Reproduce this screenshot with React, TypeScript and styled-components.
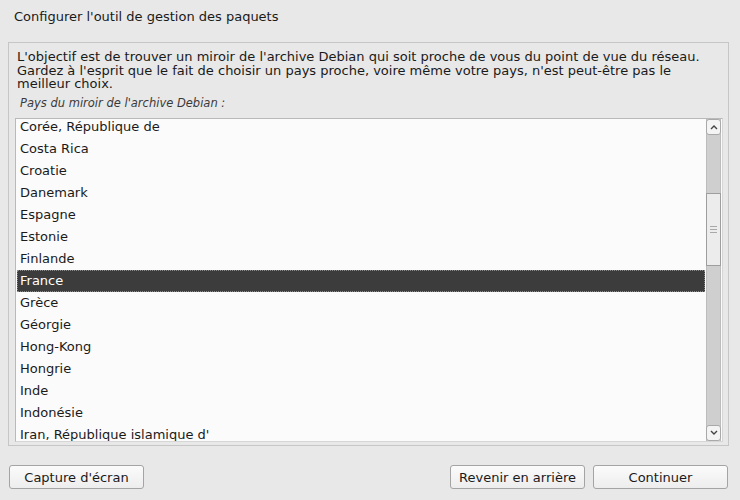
import React from 'react';
import styled, { createGlobalStyle } from 'styled-components';

const GlobalStyle = createGlobalStyle`
  html, body {
    margin: 0;
    padding: 0;
    background: #e8e8e8;
  }
  body {
    font-family: "DejaVu Sans", "Liberation Sans", sans-serif;
    font-size: 13px;
    color: #1a1a1a;
  }
`;

const countries = [
  'Corée, République de',
  'Costa Rica',
  'Croatie',
  'Danemark',
  'Espagne',
  'Estonie',
  'Finlande',
  'France',
  'Grèce',
  'Géorgie',
  'Hong-Kong',
  'Hongrie',
  'Inde',
  'Indonésie',
  "Iran, République islamique d'",
];

const Screen = styled.div`
  width: 740px;
  height: 500px;
  box-sizing: border-box;
  padding: 10px 11px 0 8px;
  display: flex;
  flex-direction: column;
`;

const Title = styled.div`
  padding-left: 6px;
  height: 14px;
  line-height: 14px;
  font-size: 13px;
  margin-bottom: 18px;
`;

const Panel = styled.div`
  height: 404px;
  box-sizing: border-box;
  border: 1px solid #c6c6c6;
  padding: 7px 5px 3px 6px;
  display: flex;
  flex-direction: column;
`;

const Intro = styled.p`
  margin: 0 0 0 2px;
  line-height: 13.5px;
`;

const Label = styled.div`
  margin: 6px 0 8.5px 5px;
  line-height: 13px;
  font-style: italic;
  font-size: 11.5px;
  color: #3a3a3a;
`;

const ListBox = styled.div`
  flex: 1;
  display: flex;
  background: #fbfbfb;
  border: 1px solid #b9b9b9;
  border-right-color: #d6d6d6;
  border-bottom-color: #d6d6d6;
  padding: 0 1px 0 1px;
  overflow: hidden;
`;

const Rows = styled.div`
  flex: 1;
  overflow: hidden;
  padding-right: 1px;
`;

const RowsInner = styled.div`
  margin-top: -3px;
`;

const Row = styled.div<{ $selected?: boolean }>`
  height: 22px;
  line-height: 22px;
  padding-left: 3px;
  box-sizing: border-box;
  white-space: nowrap;
  background: ${(p) => (p.$selected ? '#3c3c3c' : 'transparent')};
  color: ${(p) => (p.$selected ? '#ffffff' : '#1a1a1a')};
  outline: ${(p) => (p.$selected ? '1px dotted #8a8a8a' : 'none')};
  outline-offset: -1px;
`;

const Scrollbar = styled.div`
  width: 15px;
  display: flex;
  flex-direction: column;
  background: #cfcfcf;
  border-left: 1px solid #bcbcbc;
  border-right: 1px solid #bcbcbc;
  box-sizing: border-box;
`;

const Arrow = styled.div`
  height: 14px;
  background: #f4f4f4;
  border: 1px solid #a9a9a9;
  border-radius: 3px;
  margin: 0 -1px;
  display: flex;
  align-items: center;
  justify-content: center;
`;

const Track = styled.div`
  flex: 1;
  display: flex;
  flex-direction: column;
`;

const Thumb = styled.div`
  margin-top: 58px;
  height: 71px;
  background: #ececec;
  border: 1px solid #9e9e9e;
  margin-left: -1px;
  margin-right: -1px;
  display: flex;
  flex-direction: column;
  align-items: center;
  justify-content: center;
  gap: 2px;
`;

const Grip = styled.div`
  width: 7px;
  height: 1px;
  background: #a8a8a8;
`;

const Footer = styled.div`
  display: flex;
  align-items: center;
  gap: 8px;
  margin-top: 19px;
  padding: 0 1px 0 1px;
`;

const Spacer = styled.div`
  flex: 1;
`;

const Button = styled.button`
  width: 135px;
  height: 24px;
  box-sizing: border-box;
  border: 1px solid #a4a4a4;
  border-radius: 3px;
  background: linear-gradient(#fbfbfb, #ededed);
  font-family: "DejaVu Sans", "Liberation Sans", sans-serif;
  font-size: 13px;
  color: #1a1a1a;
  padding: 0;
`;

const Chevron = ({ up }: { up?: boolean }) => (
  <svg width="8" height="6" viewBox="0 0 8 6">
    <path
      d={up ? 'M1 5 L4 2 L7 5' : 'M1 1 L4 4 L7 1'}
      fill="none"
      stroke="#444"
      strokeWidth="1.4"
    />
  </svg>
);

export default function App() {
  return (
    <Screen>
      <GlobalStyle />
      <Title>Configurer l'outil de gestion des paquets</Title>
      <Panel>
        <Intro>
          L'objectif est de trouver un miroir de l'archive Debian qui soit proche de vous du point de vue du réseau.
          <br />
          Gardez à l'esprit que le fait de choisir un pays proche, voire même votre pays, n'est peut-être pas le
          meilleur choix.
        </Intro>
        <Label>Pays du miroir de l'archive Debian :</Label>
        <ListBox>
          <Rows>
            <RowsInner>
              {countries.map((c) => (
                <Row key={c} $selected={c === 'France'}>
                  {c}
                </Row>
              ))}
            </RowsInner>
          </Rows>
          <Scrollbar>
            <Arrow>
              <Chevron up />
            </Arrow>
            <Track>
              <Thumb>
                <Grip />
                <Grip />
                <Grip />
              </Thumb>
            </Track>
            <Arrow>
              <Chevron />
            </Arrow>
          </Scrollbar>
        </ListBox>
      </Panel>
      <Footer>
        <Button>Capture d'écran</Button>
        <Spacer />
        <Button>Revenir en arrière</Button>
        <Button>Continuer</Button>
      </Footer>
    </Screen>
  );
}
